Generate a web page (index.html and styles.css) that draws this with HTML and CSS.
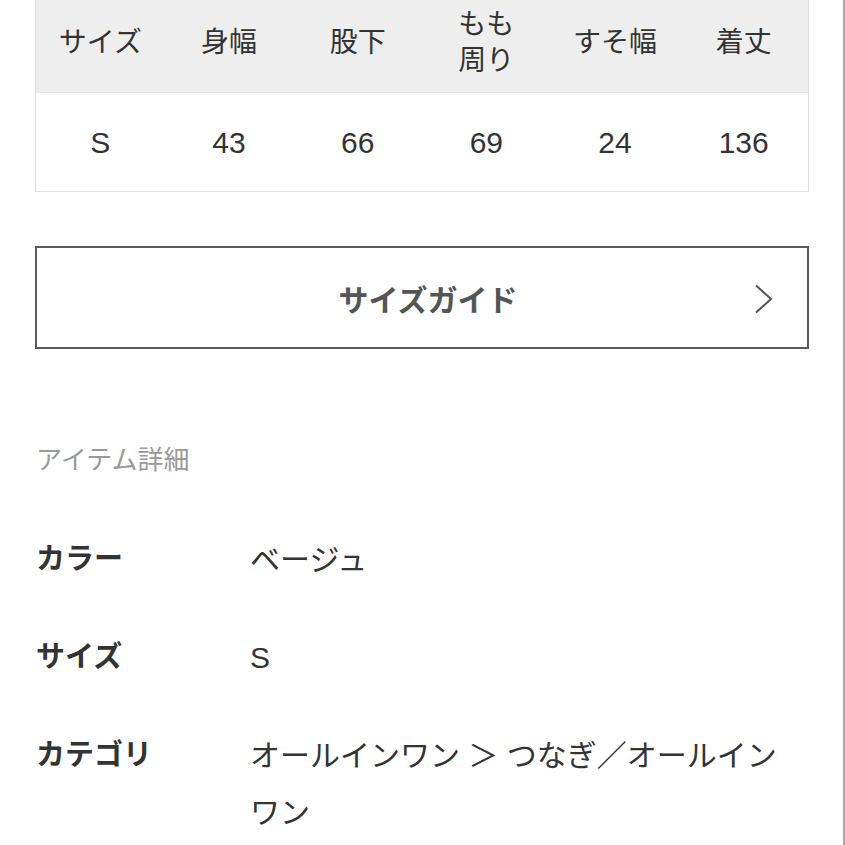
FILE: index.html
```html
<!DOCTYPE html>
<html lang="ja">
<head>
<meta charset="utf-8">
<link rel="stylesheet" href="styles.css">
</head>
<body>
<div class="page">
  <div class="size-table">
    <div class="row head">
      <div class="cell">サイズ</div>
      <div class="cell">身幅</div>
      <div class="cell">股下</div>
      <div class="cell">もも<br>周り</div>
      <div class="cell">すそ幅</div>
      <div class="cell">着丈</div>
    </div>
    <div class="row body">
      <div class="cell">S</div>
      <div class="cell">43</div>
      <div class="cell">66</div>
      <div class="cell">69</div>
      <div class="cell">24</div>
      <div class="cell">136</div>
    </div>
  </div>

  <div class="guide-btn">
    <span class="guide-label">サイズガイド</span>
    <svg class="chev" width="20" height="30" viewBox="0 0 20 30"><path d="M2 1.5 L17 15 L2 28.5" fill="none" stroke="#555" stroke-width="2"/></svg>
  </div>

  <h2 class="section-title">アイテム詳細</h2>

  <dl class="details">
    <div class="d-row">
      <dt>カラー</dt>
      <dd>ベージュ</dd>
    </div>
    <div class="d-row">
      <dt>サイズ</dt>
      <dd>S</dd>
    </div>
    <div class="d-row">
      <dt>カテゴリ</dt>
      <dd>オールインワン ＞ つなぎ／オールインワン</dd>
    </div>
  </dl>
</div>
</body>
</html>
```

FILE: styles.css
```css
html, body {
  margin: 0;
  padding: 0;
  background: #fff;
}
body {
  font-family: "Liberation Sans", "Noto Sans CJK JP", sans-serif;
  color: #333;
  overflow: hidden;
}
.page {
  width: 845px;
  height: 845px;
  box-sizing: border-box;
  border-right: 2px solid #a8a8a8;
  padding-left: 35px;
  padding-right: 34px;
  overflow: hidden;
}
.size-table {
  margin-top: -7px;
  width: 774px;
  border: 1px solid #e2e2e2;
  border-top: none;
  box-sizing: border-box;
}
.row {
  display: grid;
  grid-template-columns: repeat(6, 1fr);
}
.row.head {
  background: #eeeeee;
  height: 100px;
  border-bottom: 1px solid #e6e6e6;
  box-sizing: border-box;
}
.row.body {
  height: 98px;
  background: #fff;
}
.cell {
  display: flex;
  align-items: center;
  justify-content: center;
  text-align: center;
  font-size: 28px;
  line-height: 36px;
  color: #333;
}
.row.body .cell {
  font-size: 30px;
  padding-top: 1px;
}
.guide-btn {
  margin-top: 54px;
  width: 774px;
  height: 103px;
  box-sizing: border-box;
  border: 2px solid #5a5a5a;
  display: flex;
  align-items: center;
  justify-content: center;
  position: relative;
}
.guide-label {
  font-size: 30px;
  font-weight: bold;
  color: #555;
  margin-left: 12px;
}
.chev {
  position: absolute;
  right: 33px;
  top: 36px;
}
.section-title {
  margin: 96px 0 0 1px;
  font-size: 26px;
  font-weight: normal;
  color: #999;
  line-height: 30px;
}
.details {
  margin: 56px 0 0 1px;
  padding: 0;
}
.d-row {
  display: grid;
  grid-template-columns: 214px 1fr;
  margin-bottom: 41px;
}
.d-row dt {
  font-size: 29px;
  font-weight: bold;
  line-height: 57px;
  color: #333;
}
.d-row dd {
  margin: 0;
  font-size: 30px;
  line-height: 57px;
  color: #333;
  padding-right: 15px;
}
```
